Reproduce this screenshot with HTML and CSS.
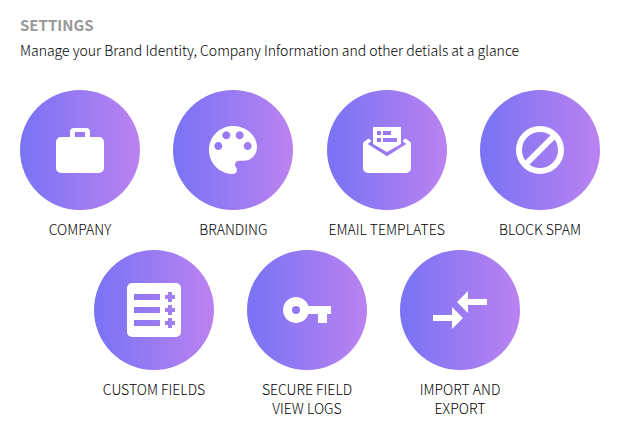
FILE: index.html
```html
<!DOCTYPE html>
<html lang="en">
<head>
<meta charset="utf-8">
<title>Settings</title>
<link rel="stylesheet" href="styles.css">
</head>
<body>
<main class="settings">
  <header class="intro">
    <h1 class="title">SETTINGS</h1>
    <p class="summary">Manage your Brand Identity, Company Information and other detials at a glance</p>
  </header>
  <nav class="tiles">
    <div class="row row-full">
      <a class="tile" href="#company">
        <svg class="icon" viewBox="0 0 120 120" aria-hidden="true"><path fill-rule="evenodd" d="M50 47V42a4 4 0 0 1 4-4H66a4 4 0 0 1 4 4V47H79a5 5 0 0 1 5 5V78a5 5 0 0 1-5 5H41a5 5 0 0 1-5-5V52a5 5 0 0 1 5-5zM55 42V47H65V42z"/></svg>
        <span class="label">COMPANY</span>
      </a>
      <a class="tile" href="#branding">
        <svg class="icon" viewBox="0 0 120 120" aria-hidden="true"><path transform="translate(28 28) scale(2.6667)" d="M12 3c-4.97 0-9 4.03-9 9s4.03 9 9 9c.83 0 1.5-.67 1.5-1.5 0-.39-.15-.74-.39-1.01-.23-.26-.38-.61-.38-.99 0-.83.67-1.5 1.5-1.5H16c2.76 0 5-2.24 5-5 0-4.42-4.03-8-9-8zm-5.5 9c-.83 0-1.5-.67-1.5-1.5S5.67 9 6.5 9 8 9.67 8 10.5 7.33 12 6.5 12zm3-4C8.67 8 8 7.33 8 6.5S8.67 5 9.5 5s1.5.67 1.5 1.5S10.33 8 9.5 8zm5 0c-.83 0-1.5-.67-1.5-1.5S13.67 5 14.5 5s1.5.67 1.5 1.5S15.33 8 14.5 8zm3 4c-.83 0-1.5-.67-1.5-1.5S16.67 9 17.5 9s1.5.67 1.5 1.5-.67 1.5-1.5 1.5z"/></svg>
        <span class="label">BRANDING</span>
      </a>
      <a class="tile" href="#email-templates">
        <svg class="icon" viewBox="0 0 120 120" aria-hidden="true"><path fill-rule="evenodd" d="M46 37H74V54L60 62L46 54zM50 41V45H54V41zM56 41V45H64V41zM50 48V52H54V48zM56 48V52H70V48z"/><path d="M36 54Q36 52 38 51L41 48.7Q43 48.3 44 50.5V51.5L40.7 54L60 66.3L79.3 54L76 51.5V50.5Q77 48.3 79 48.7L82 51Q84 52 84 54V78a5 5 0 0 1-5 5H41a5 5 0 0 1-5-5z"/></svg>
        <span class="label">EMAIL TEMPLATES</span>
      </a>
      <a class="tile" href="#block-spam">
        <svg class="icon" viewBox="0 0 120 120" aria-hidden="true"><g class="outline"><circle cx="60" cy="60" r="21"/><path d="M46 74L74 46"/></g></svg>
        <span class="label">BLOCK SPAM</span>
      </a>
    </div>
    <div class="row row-partial">
      <a class="tile" href="#custom-fields">
        <svg class="icon" viewBox="0 0 120 120" aria-hidden="true"><path fill-rule="evenodd" d="M38 33H82a5 5 0 0 1 5 5V82a5 5 0 0 1-5 5H38a5 5 0 0 1-5-5V38a5 5 0 0 1 5-5zM40 44V50H66V44zM40 57V63H66V57zM40 70V76H66V70zM74 42V45H71V49H74V52H78V49H81V45H78V42zM74 55V58H71V62H74V65H78V62H81V58H78V55zM74 68V71H71V75H74V78H78V75H81V71H78V68z"/></svg>
        <span class="label">CUSTOM FIELDS</span>
      </a>
      <a class="tile" href="#secure-field-logs">
        <svg class="icon" viewBox="0 0 120 120" aria-hidden="true"><path fill-rule="evenodd" d="M61.4 56H84V64H80V73H71V64H61.4A13 13 0 1 1 61.4 56zM49 56a4 4 0 1 0 0 8a4 4 0 1 0 0-8z"/></svg>
        <span class="label">SECURE FIELD VIEW LOGS</span>
      </a>
      <a class="tile" href="#import-export">
        <svg class="icon" viewBox="0 0 120 120" aria-hidden="true"><path d="M33 65H52V57L63 68L52 79V71H33zM87 49H68V41L57 52L68 63V55H87z"/></svg>
        <span class="label">IMPORT AND EXPORT</span>
      </a>
    </div>
  </nav>
</main>
</body>
</html>
```
FILE: styles.css
```css
* {
  box-sizing: border-box;
}

body {
  margin: 0;
  background: #fff;
  color: #000;
  font-family: "Noto Sans CJK SC", "Noto Sans", sans-serif;
  font-size: 14px;
  font-weight: 300;
  line-height: 19px;
}

.settings {
  padding: 15px 20px;
}

.intro {
  margin-bottom: 30px;
}

.title {
  margin: 0 0 6px;
  color: #999;
  font-size: 15px;
  line-height: 20px;
  font-weight: 700;
}

.summary {
  margin: 0;
}

.tiles {
  display: flex;
  flex-direction: column;
  gap: 11px;
}

.row {
  display: flex;
}

.row-full {
  justify-content: space-between;
}

.row-partial {
  justify-content: center;
  gap: 33px;
  padding-right: 6px;
}

.tile {
  display: flex;
  flex-direction: column;
  gap: 10px;
  width: 120px;
  color: inherit;
  text-align: center;
  text-decoration: none;
}

.icon {
  display: block;
  width: 100%;
  border-radius: 50%;
  background: linear-gradient(to right, #7873f5, #bb82f0);
  fill: #fff;
}

.outline {
  fill: none;
  stroke: #fff;
  stroke-width: 6;
}
```
